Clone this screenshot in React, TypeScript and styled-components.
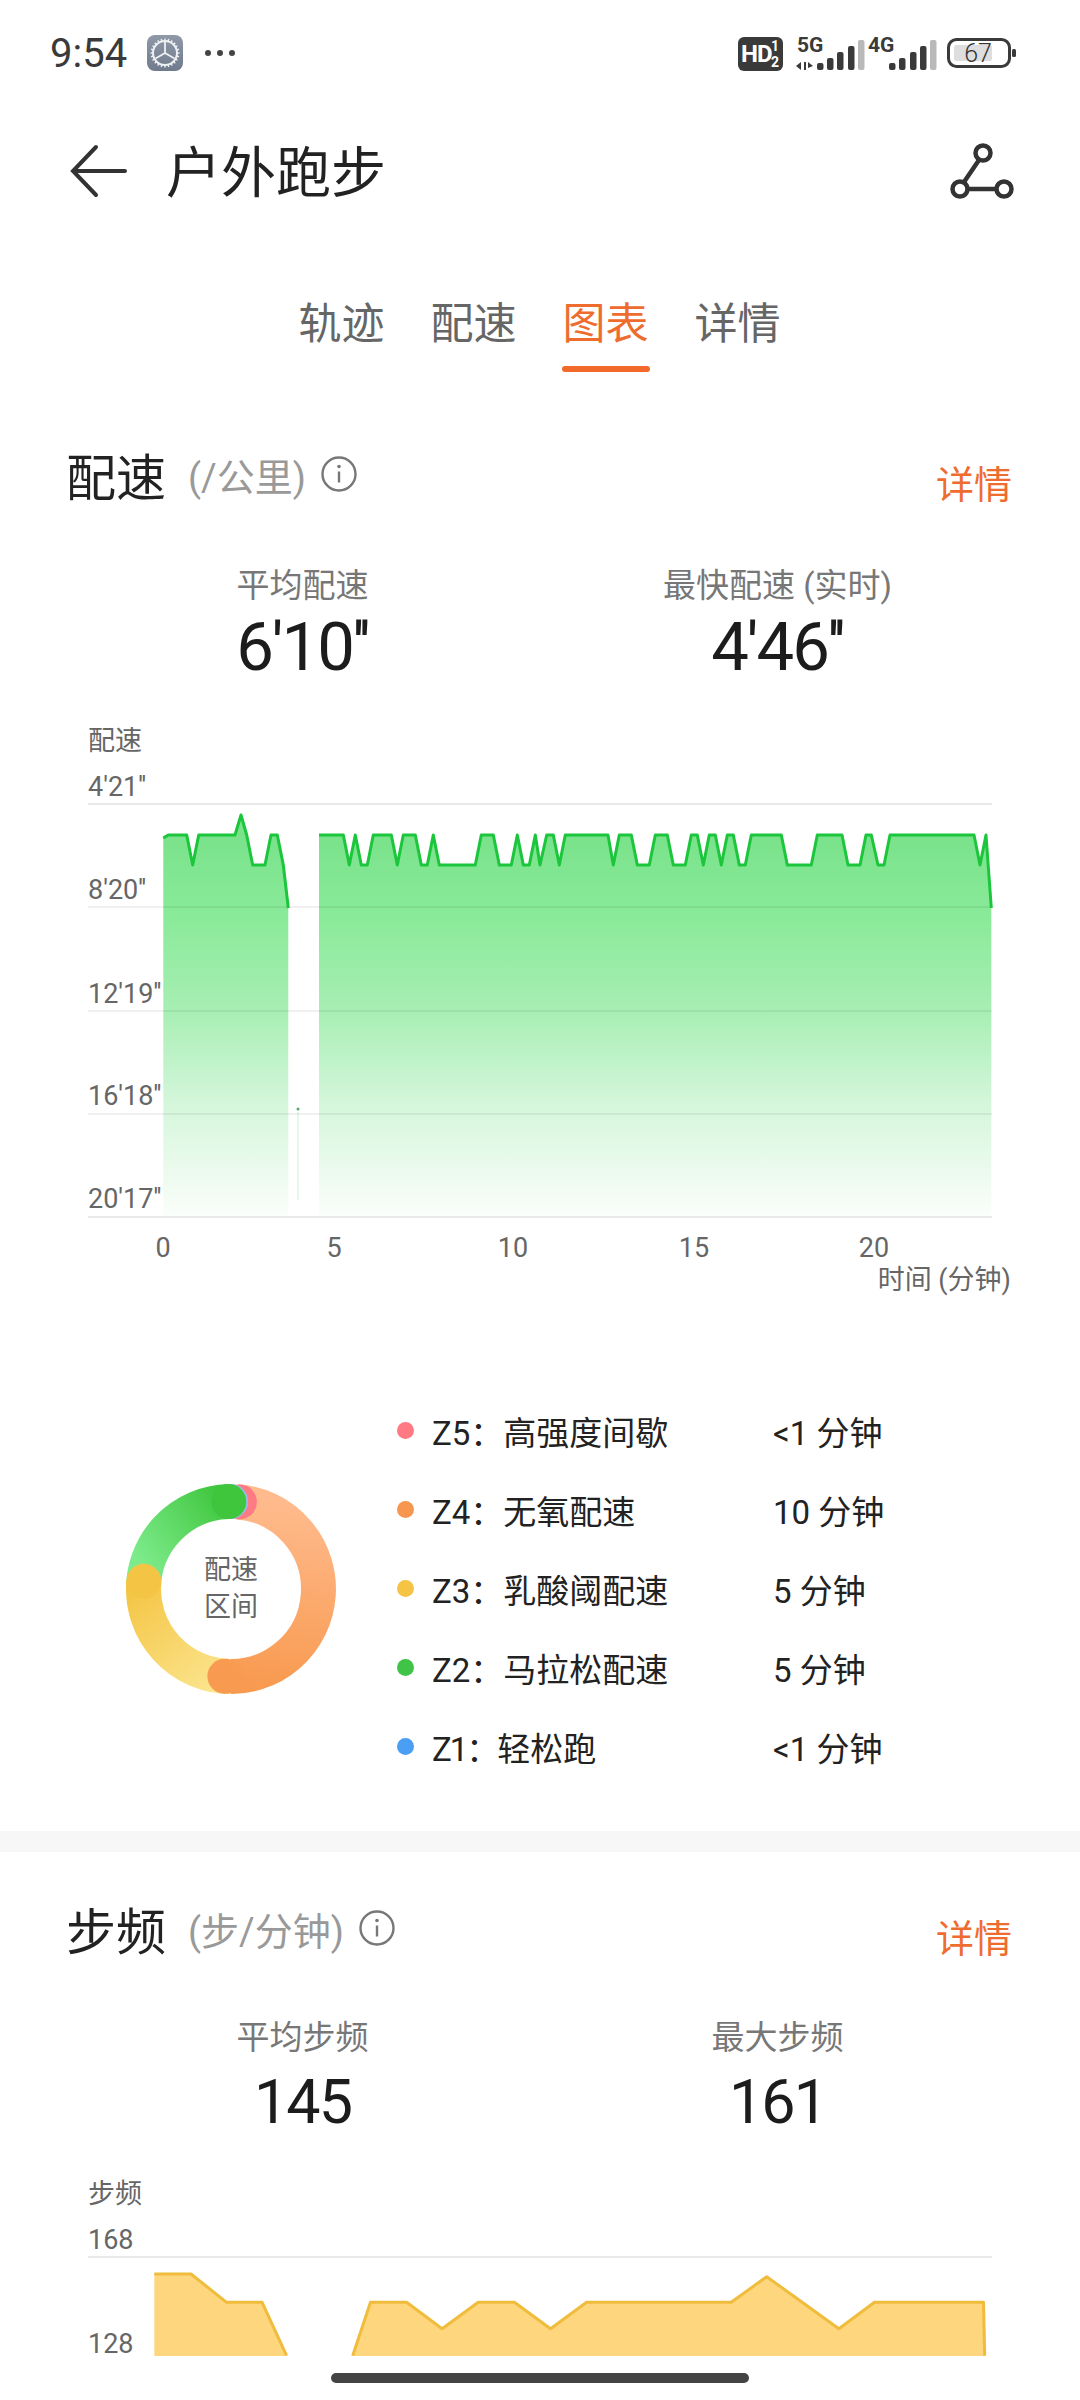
import styled, { createGlobalStyle } from "styled-components";

const GlobalStyle = createGlobalStyle`
  html, body {
    margin: 0;
    padding: 0;
    background: #fff;
  }
  body {
    font-family: Roboto, "Noto Sans CJK SC", sans-serif;
    color: #222;
  }
`;

const Page = styled.div`
  position: relative;
  width: 1080px;
  height: 2400px;
  overflow: hidden;
  background: #fff;
`;

const StatusBar = styled.div`
  display: flex;
  align-items: center;
  justify-content: space-between;
  height: 106px;
  padding: 0 62px 0 50px;
`;

const StatusLeft = styled.div`
  display: flex;
  align-items: center;
  gap: 20px;
`;

const Clock = styled.span`
  font-size: 40px;
  color: #3a3a3a;
`;

const Dots = styled.div`
  display: flex;
  gap: 6px;
  margin-left: 2px;
`;

const Dot = styled.i`
  width: 6px;
  height: 6px;
  border-radius: 50%;
  background: #444;
`;

const StatusSvg = styled.svg`
  margin-top: 4px;
`;

const Header = styled.header`
  display: flex;
  align-items: center;
  justify-content: space-between;
  height: 130px;
  padding: 0 66px 0 68px;
`;

const HeaderLeft = styled.div`
  display: flex;
  align-items: center;
  gap: 38px;
`;

const Title = styled.h1`
  margin: 0;
  padding-bottom: 7px;
  font-size: 55px;
  font-weight: 400;
  color: #222;
`;

const Tabs = styled.nav`
  display: flex;
  justify-content: center;
  gap: 44px;
  margin-top: 60px;
  padding-right: 1px;
`;

const Tab = styled.div<{ $active?: boolean }>`
  display: flex;
  flex-direction: column;
  align-items: center;
  font-size: 43px;
  line-height: 56px;
  color: ${(p) => (p.$active ? "#ef6c2f" : "#666")};

  &::after {
    content: "";
    width: 88px;
    height: 6px;
    margin-top: 14px;
    border-radius: 3px;
    background: ${(p) => (p.$active ? "#f26a2a" : "transparent")};
  }
`;

const SectionHead = styled.div<{ $top: number }>`
  display: flex;
  align-items: center;
  height: 60px;
  margin-top: ${(p) => p.$top}px;
  padding: 0 68px 0 66px;
`;

const SectionName = styled.h2`
  margin: 0;
  font-size: 50px;
  font-weight: 400;
  color: #222;
`;

const SectionUnit = styled.span`
  margin-left: 22px;
  font-size: 38px;
  color: #999;
`;

const InfoButton = styled.svg`
  margin-left: 15px;
`;

const DetailLink = styled.a`
  margin-left: auto;
  padding-top: 14px;
  font-size: 38px;
  color: #ef6c2f;
`;

const Stats = styled.div<{ $top: number }>`
  display: grid;
  grid-template-columns: 475px 475px;
  margin-top: ${(p) => p.$top}px;
  padding: 0 65px;
`;

const Stat = styled.div`
  display: flex;
  flex-direction: column;
  align-items: center;
`;

const StatLabel = styled.span`
  font-size: 33px;
  line-height: 40px;
  color: #777;
`;

const StatValue = styled.span<{ $compact?: boolean }>`
  padding-top: ${(p) => (p.$compact ? 3 : 0)}px;
  font-size: ${(p) => (p.$compact ? 61 : 67)}px;
  line-height: 82px;
  letter-spacing: -2px;
  color: #1c1c1c;
`;

const ChartSvg = styled.svg<{ $top: number }>`
  display: block;
  width: 1080px;
  margin-top: ${(p) => p.$top}px;
`;

const AxisText = styled.text`
  font-family: Roboto, "Noto Sans CJK SC", sans-serif;
  font-size: 27px;
  fill: #666;
`;

const ZoneRow = styled.div`
  display: flex;
  align-items: center;
  gap: 61px;
  padding: 91px 0 45px 126px;
`;

const Donut = styled.div`
  position: relative;
  width: 210px;
  height: 210px;
`;

const DonutLabel = styled.div`
  position: absolute;
  inset: 0;
  display: flex;
  align-items: center;
  justify-content: center;
  padding-top: 1px;
  text-align: center;
  font-size: 27px;
  line-height: 37px;
  color: #666;
`;

const Legend = styled.ul`
  margin: 0;
  padding: 0;
  list-style: none;
`;

const LegendRow = styled.li`
  display: grid;
  grid-template-columns: 17px 323px auto;
  column-gap: 18px;
  align-items: center;
  height: 79px;
  font-size: 33px;
  color: #222;
`;

const LegendDot = styled.i<{ $color: string }>`
  width: 17px;
  height: 17px;
  border-radius: 50%;
  background: ${(p) => p.$color};
`;

const ZoneCode = styled.span<{ $narrow: boolean }>`
  letter-spacing: ${(p) => (p.$narrow ? -2 : 0)}px;
`;

const Divider = styled.div`
  height: 21px;
  background: #f7f7f7;
`;

const BottomBar = styled.div`
  position: absolute;
  left: 0;
  right: 0;
  bottom: 0;
  display: flex;
  justify-content: center;
  height: 44px;
  padding-top: 17px;
  box-sizing: border-box;
  background: #fff;
`;

const HomePill = styled.div`
  width: 418px;
  height: 10px;
  border-radius: 5px;
  background: #444;
`;

// points read off the screenshot, x as page px
const HI = 835;
const LO = 865;
type Pt = [number, number];
const px = (z: number) => 60 + z / 3;
const qx = (z: number) => 540 + z / 3;

const paceA: Pt[] = [
  [px(310), 838], [px(325), HI], [px(380), HI], [px(398), LO], [px(416), HI], [px(525), HI],
  [px(543), 815], [px(560), HI], [px(578), LO], [px(615), LO], [px(633), HI], [px(652), HI],
  [px(670), LO], [px(685), 908],
];

const paceLeft: Pt[] = [
  [777, HI], [850, HI], [868, LO], [886, HI], [904, LO], [922, LO], [940, HI], [994, HI], [1012, LO],
  [1030, HI], [1066, HI], [1084, LO], [1102, LO], [1120, HI], [1138, LO], [1246, LO], [1264, HI],
  [1300, HI], [1318, LO], [1354, LO], [1372, HI], [1390, LO], [1408, LO], [1426, HI],
];

const paceRight: Pt[] = [
  [0, LO], [20, HI], [40, HI], [58, LO], [76, HI], [204, HI], [220, LO], [238, HI], [274, HI], [292, LO],
  [328, LO], [346, HI], [382, HI], [400, LO], [436, LO], [454, HI], [472, HI], [490, LO], [508, HI],
  [526, HI], [544, LO], [562, HI], [580, HI], [598, LO], [616, LO], [634, HI], [724, HI], [742, LO],
  [814, LO], [832, HI], [906, HI], [924, LO], [960, LO], [978, HI], [994, HI], [1014, LO], [1032, LO],
  [1050, HI], [1302, HI], [1320, LO], [1338, HI], [1354, 908],
];

const paceB: Pt[] = [
  ...paceLeft.map(([z, y]): Pt => [px(z), y]),
  ...paceRight.map(([z, y]): Pt => [qx(z), y]),
];

const stepZ: Pt[][] = [
  [[154, 372], [214, 372], [272, 457], [330, 457], [370, 617]],
  [[478, 617], [507, 457], [566, 457], [624, 536], [683, 457], [742, 457], [801, 536], [860, 457],
    [1096, 457], [1154, 380], [1272, 536], [1330, 457], [1508, 457], [1510, 617]],
];
const steps = stepZ.map((s) => s.map(([x, y]): Pt => [60 + x / 1.633, 2150 + y / 3]));

const toLine = (p: Pt[]) => p.map(([x, y]) => `${x.toFixed(1)},${y.toFixed(1)}`).join(" ");

const toArea = (p: Pt[], bottom: number) =>
  `${p[0][0].toFixed(1)},${bottom} ${toLine(p)} ${p[p.length - 1][0].toFixed(1)},${bottom}`;

const paceGrid = [804, 907, 1011, 1114, 1217];
const paceTicks = ["4'21''", "8'20''", "12'19''", "16'18''", "20'17''"];
const paceTickY = [786, 889, 993, 1095, 1198];
const timeTicks: [string, number][] = [["0", 163], ["5", 334], ["10", 513], ["15", 694], ["20", 874]];

const zones = [
  { color: "#ff7a82", code: "Z5", name: "高强度间歇", time: "<1 分钟" },
  { color: "#f7964f", code: "Z4", name: "无氧配速", time: "10 分钟" },
  { color: "#f5c445", code: "Z3", name: "乳酸阈配速", time: "5 分钟" },
  { color: "#3fc447", code: "Z2", name: "马拉松配速", time: "5 分钟" },
  { color: "#4a9ff5", code: "Z1", name: "轻松跑", time: "<1 分钟" },
];

const R = 87.5;
const polar = (deg: number): Pt => {
  const a = (deg * Math.PI) / 180;
  return [105 + R * Math.sin(a), 105 - R * Math.cos(a)];
};

const arc = (from: number, to: number) => {
  const [x1, y1] = polar(from);
  const [x2, y2] = polar(to);
  const large = to - from > 180 ? 1 : 0;
  return `M${x1} ${y1}A${R} ${R} 0 ${large} 1 ${x2} ${y2}`;
};

function Cap({ deg, fill }: { deg: number; fill: string }) {
  const [x, y] = polar(deg);
  return <circle cx={x} cy={y} r={17.5} fill={fill} />;
}

function ZoneDonut() {
  return (
    <Donut>
      <svg width="210" height="210" viewBox="0 0 210 210">
        <defs>
          <linearGradient id="zOrange" gradientUnits="userSpaceOnUse" x1="130" y1="10" x2="110" y2="200">
            <stop offset="0" stopColor="#ffbb8e" />
            <stop offset="1" stopColor="#f89a50" />
          </linearGradient>
          <linearGradient id="zYellow" gradientUnits="userSpaceOnUse" x1="100" y1="195" x2="25" y2="90">
            <stop offset="0" stopColor="#fbe48d" />
            <stop offset="1" stopColor="#f4c544" />
          </linearGradient>
          <linearGradient id="zGreen" gradientUnits="userSpaceOnUse" x1="20" y1="85" x2="105" y2="20">
            <stop offset="0" stopColor="#7deb8b" />
            <stop offset="1" stopColor="#3fc63d" />
          </linearGradient>
        </defs>
        <g fill="none" strokeWidth="35">
          <path d={arc(4, 184)} stroke="url(#zOrange)" />
          <Cap deg={5.5} fill="#ff7a85" />
          <Cap deg={-0.2} fill="#8fbfe8" />
          <path d={arc(268, 358.5)} stroke="url(#zGreen)" />
          <Cap deg={-1.5} fill="#3fc63d" />
          <path d={arc(180, 275)} stroke="url(#zYellow)" />
          <Cap deg={275} fill="#f4c544" />
          <Cap deg={184} fill="#f89a50" />
        </g>
      </svg>
      <DonutLabel>
        配速
        <br />
        区间
      </DonutLabel>
    </Donut>
  );
}

function InfoIcon() {
  return (
    <InfoButton width="36" height="36" viewBox="0 0 36 36" fill="none" stroke="#777">
      <circle cx="18" cy="18" r="16.5" strokeWidth="2.4" />
      <circle cx="18" cy="10.5" r="1.8" fill="#777" stroke="none" />
      <path d="M18 15.5v11" strokeWidth="2.4" />
    </InfoButton>
  );
}

function SignalBars({ x, tops }: { x: number[]; tops: number[] }) {
  return (
    <>
      {x.map((bx, i) => (
        <rect
          key={bx}
          x={bx}
          y={tops[i]}
          width="6.5"
          height={33 - tops[i]}
          rx="2"
          fill={i === x.length - 1 ? "#b9b9b9" : "#3a3a3a"}
        />
      ))}
    </>
  );
}

function StatusIcons() {
  return (
    <StatusSvg width="280" height="48" viewBox="0 -6 280 48">
      <rect x="0" y="0" width="45" height="34" rx="6" fill="#3a3a3a" />
      <text x="3" y="25" fontFamily="Roboto" fontWeight="700" fontSize="24" letterSpacing="-1" fill="#fff">HD</text>
      <text x="33" y="14" fontFamily="Roboto" fontWeight="700" fontSize="14" fill="#fff">1</text>
      <text x="33" y="30" fontFamily="Roboto" fontWeight="700" fontSize="14" fill="#fff">2</text>
      <text x="59" y="15" fontFamily="Roboto" fontWeight="700" fontSize="21" fill="#3a3a3a">5G</text>
      <path d="M58 29l5-4v8zM66 25h2v8h-2zM70 25l5 4-5 2z" fill="#3a3a3a" />
      <SignalBars x={[79, 89, 99, 110, 120]} tops={[26, 21, 15, 9, 3]} />
      <text x="130" y="15" fontFamily="Roboto" fontWeight="700" fontSize="21" fill="#3a3a3a">4G</text>
      <SignalBars x={[151, 161, 172, 182, 192]} tops={[26, 21, 15, 9, 3]} />
      <rect x="210.5" y="2.5" width="61" height="27" rx="8" fill="#fff" stroke="#3a3a3a" strokeWidth="3" />
      <rect x="216" y="8" width="38" height="16" rx="2" fill="#dedede" />
      <text x="240" y="25" textAnchor="middle" fontFamily="Roboto" fontWeight="300" fontSize="25" fill="#333">67</text>
      <rect x="274" y="12" width="4" height="8" rx="1.5" fill="#3a3a3a" />
    </StatusSvg>
  );
}

function SettingsIcon() {
  const teeth = Array.from({ length: 24 }, (_, i) => i * 15);
  return (
    <svg width="36" height="36" viewBox="0 0 36 36">
      <defs>
        <linearGradient id="gearBg" x1="0" y1="0" x2="0" y2="1">
          <stop offset="0" stopColor="#8f99a8" />
          <stop offset="1" stopColor="#6f7a8c" />
        </linearGradient>
      </defs>
      <rect width="36" height="36" rx="8" fill="url(#gearBg)" />
      <circle cx="18" cy="18" r="12" fill="none" stroke="#eef1f4" strokeWidth="2" />
      {teeth.map((d) => (
        <rect key={d} x="17.3" y="3.5" width="1.4" height="2.4" fill="#eef1f4" transform={`rotate(${d} 18 18)`} />
      ))}
      <path d="M18 18V7M18 18l9.5 5.5M18 18L8.5 23.5" stroke="#eef1f4" strokeWidth="1.8" />
    </svg>
  );
}

export default function App() {
  return (
    <Page>
      <GlobalStyle />
      <StatusBar>
        <StatusLeft>
          <Clock>9:54</Clock>
          <SettingsIcon />
          <Dots>
            <Dot />
            <Dot />
            <Dot />
          </Dots>
        </StatusLeft>
        <StatusIcons />
      </StatusBar>

      <Header>
        <HeaderLeft>
          <svg width="60" height="54" viewBox="0 0 60 54" fill="none" stroke="#333" strokeWidth="4" strokeLinecap="round">
            <path d="M5 27h52M28 3L5 27l23 24" />
          </svg>
          <Title>户外跑步</Title>
        </HeaderLeft>
        <svg width="64" height="56" viewBox="0 0 64 56" fill="none" stroke="#333" strokeWidth="4.5">
          <circle cx="33" cy="10" r="7.5" />
          <circle cx="10" cy="46" r="7.5" />
          <circle cx="54" cy="46" r="7.5" />
          <path d="M29 17L14 39M18 46h28" />
        </svg>
      </Header>

      <Tabs>
        <Tab>轨迹</Tab>
        <Tab>配速</Tab>
        <Tab $active>图表</Tab>
        <Tab>详情</Tab>
      </Tabs>

      <SectionHead $top={72}>
        <SectionName>配速</SectionName>
        <SectionUnit>(/公里)</SectionUnit>
        <InfoIcon />
        <DetailLink>详情</DetailLink>
      </SectionHead>

      <Stats $top={62}>
        <Stat>
          <StatLabel>平均配速</StatLabel>
          <StatValue>6'10''</StatValue>
        </Stat>
        <Stat>
          <StatLabel>最快配速 (实时)</StatLabel>
          <StatValue>4'46''</StatValue>
        </Stat>
      </Stats>

      <ChartSvg $top={32} height="580" viewBox="0 720 1080 580">
        <defs>
          <linearGradient id="paceFill" gradientUnits="userSpaceOnUse" x1="0" y1="835" x2="0" y2="1217">
            <stop offset="0" stopColor="#7ae28b" />
            <stop offset="0.2" stopColor="#88ea98" />
            <stop offset="0.45" stopColor="#a6eeb2" />
            <stop offset="0.7" stopColor="#d4f6da" />
            <stop offset="1" stopColor="#fbfefb" />
          </linearGradient>
        </defs>
        <polygon points={toArea(paceA, 1216)} fill="url(#paceFill)" />
        <polygon points={toArea(paceB, 1216)} fill="url(#paceFill)" />
        <path d="M298 1112V1200" stroke="#dff5e3" strokeWidth="1.5" />
        <circle cx="298" cy="1109" r="1.5" fill="#5aa86a" />
        {paceGrid.map((y, i) => (
          <line
            key={y}
            x1="88"
            x2="992"
            y1={y}
            y2={y}
            stroke={i === 0 || i === 4 ? "#e9e9e9" : "rgba(0,0,0,0.08)"}
            strokeWidth={i === 0 || i === 4 ? 2 : 1.5}
          />
        ))}
        <polyline points={toLine(paceA)} fill="none" stroke="#1cc63c" strokeWidth="3" strokeLinejoin="round" />
        <polyline points={toLine(paceB)} fill="none" stroke="#1cc63c" strokeWidth="3" strokeLinejoin="round" />
        <AxisText x="88" y="750">配速</AxisText>
        {paceTicks.map((t, i) => (
          <AxisText key={t} x="88" y={paceTickY[i] + 10}>{t}</AxisText>
        ))}
        {timeTicks.map(([t, x]) => (
          <AxisText key={t} x={x} y="1257" textAnchor="middle">{t}</AxisText>
        ))}
        <AxisText x="1011" y="1289" textAnchor="end">时间 (分钟)</AxisText>
      </ChartSvg>

      <ZoneRow>
        <ZoneDonut />
        <Legend>
          {zones.map((z) => (
            <LegendRow key={z.code}>
              <LegendDot $color={z.color} />
              <span>
                <ZoneCode $narrow={z.code === "Z1"}>{z.code}：</ZoneCode>
                {z.name}
              </span>
              <span>{z.time}</span>
            </LegendRow>
          ))}
        </Legend>
      </ZoneRow>

      <Divider />

      <SectionHead $top={46}>
        <SectionName>步频</SectionName>
        <SectionUnit>(步/分钟)</SectionUnit>
        <InfoIcon />
        <DetailLink>详情</DetailLink>
      </SectionHead>

      <Stats $top={60}>
        <Stat>
          <StatLabel>平均步频</StatLabel>
          <StatValue $compact>145</StatValue>
        </Stat>
        <Stat>
          <StatLabel>最大步频</StatLabel>
          <StatValue $compact>161</StatValue>
        </Stat>
      </Stats>

      <ChartSvg $top={17} height="240" viewBox="0 2160 1080 240">
        <line x1="88" x2="992" y1="2257" y2="2257" stroke="#e9e9e9" strokeWidth="2" />
        {steps.map((s) => (
          <g key={s[0][0]}>
            <polygon points={toArea(s, 2356)} fill="#fdd67d" />
            <polyline points={toLine(s)} fill="none" stroke="#f0bc3c" strokeWidth="3" strokeLinejoin="round" />
          </g>
        ))}
        <AxisText x="88" y="2203">步频</AxisText>
        <AxisText x="88" y="2249">168</AxisText>
        <AxisText x="88" y="2353">128</AxisText>
      </ChartSvg>

      <BottomBar>
        <HomePill />
      </BottomBar>
    </Page>
  );
}
